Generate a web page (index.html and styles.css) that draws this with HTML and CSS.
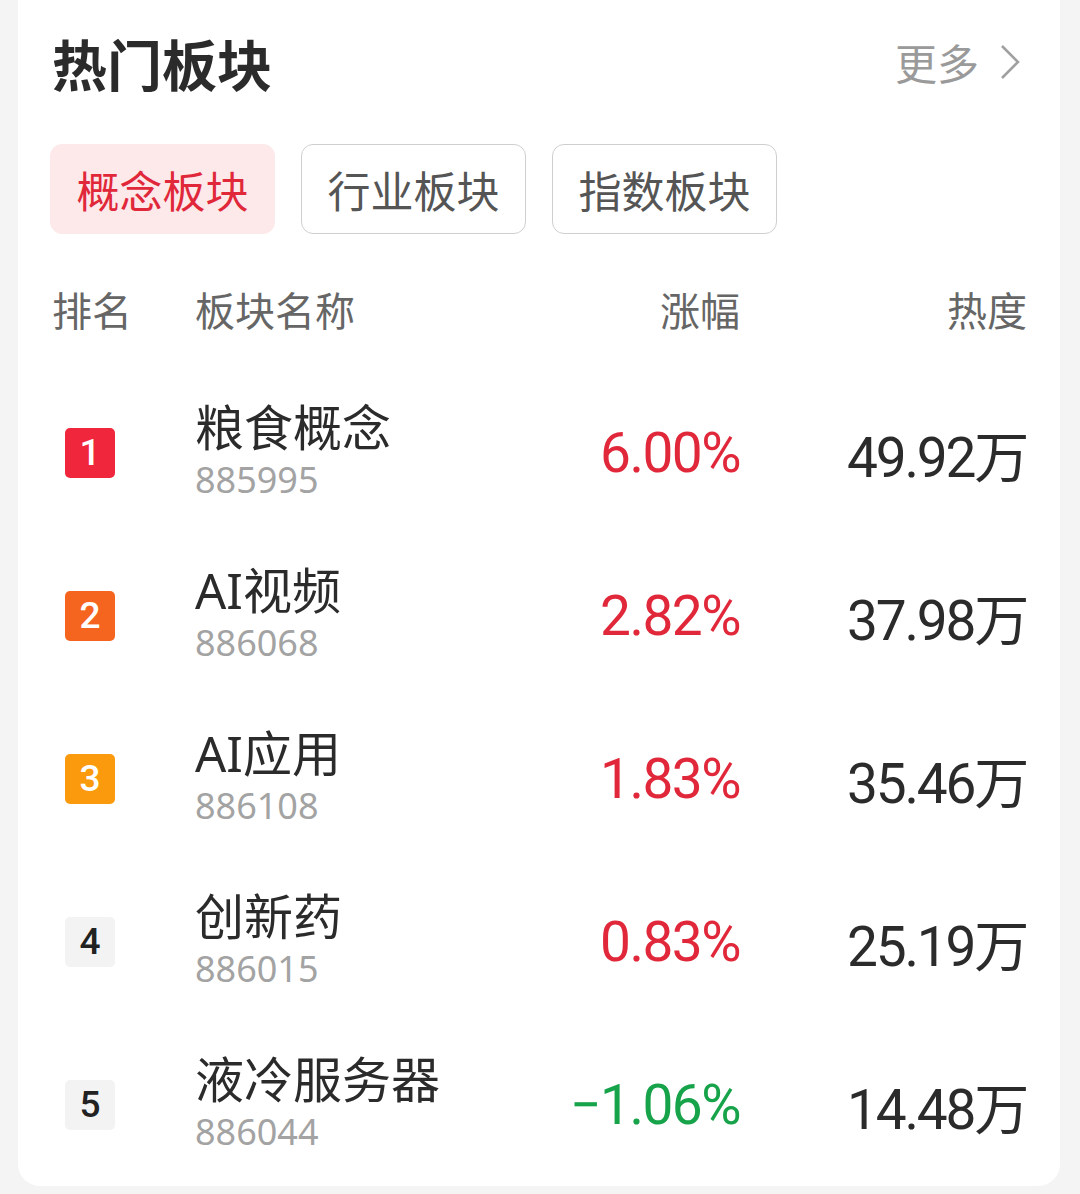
FILE: index.html
```html
<!DOCTYPE html>
<html lang="zh-CN">
<head>
    <meta charset="UTF-8">
    <meta name="viewport" content="width=device-width, initial-scale=1.0">
    <title>热门板块</title>
    <link rel="stylesheet" href="styles.css">
</head>
<body>
    <div class="card">
        <div class="card-head">
            <h1>热门板块</h1>
            <a class="more">更多
                <svg width="22" height="38" viewBox="0 0 22 38"><path d="M3 3 L19 19 L3 35" fill="none" stroke="#a0a0a0" stroke-width="2.6"/></svg>
            </a>
        </div>

        <div class="tabs">
            <span class="tab active">概念板块</span>
            <span class="tab">行业板块</span>
            <span class="tab">指数板块</span>
        </div>

        <div class="thead">
            <span>排名</span>
            <span>板块名称</span>
            <span class="num">涨幅</span>
            <span class="num">热度</span>
        </div>

        <div class="row">
            <div><span class="rank r1">1</span></div>
            <div class="name"><div class="title">粮食概念</div><div class="code">885995</div></div>
            <div class="num change up">6.00%</div>
            <div class="num heat">49.92万</div>
        </div>
        <div class="row">
            <div><span class="rank r2">2</span></div>
            <div class="name"><div class="title">AI视频</div><div class="code">886068</div></div>
            <div class="num change up">2.82%</div>
            <div class="num heat">37.98万</div>
        </div>
        <div class="row">
            <div><span class="rank r3">3</span></div>
            <div class="name"><div class="title">AI应用</div><div class="code">886108</div></div>
            <div class="num change up">1.83%</div>
            <div class="num heat">35.46万</div>
        </div>
        <div class="row">
            <div><span class="rank">4</span></div>
            <div class="name"><div class="title">创新药</div><div class="code">886015</div></div>
            <div class="num change up">0.83%</div>
            <div class="num heat">25.19万</div>
        </div>
        <div class="row">
            <div><span class="rank">5</span></div>
            <div class="name"><div class="title">液冷服务器</div><div class="code">886044</div></div>
            <div class="num change down">&minus;1.06%</div>
            <div class="num heat">14.48万</div>
        </div>
    </div>
</body>
</html>
```

FILE: styles.css
```css
body {
    margin: 0;
    background: #f4f4f4;
    font-family: "Noto Sans", "Noto Sans CJK SC", sans-serif;
    color: #333;
}
.card {
    background: #fff;
    margin: 0 20px 0 18px;
    padding: 25px 33px 0 34px;
    border-radius: 0 0 22px 22px;
}
.card-head {
    height: 73px;
    display: flex;
    align-items: center;
    justify-content: space-between;
}
h1 {
    margin: 0;
    font-size: 55px;
    font-weight: 700;
    color: #2b2b2b;
}
.more {
    display: flex;
    align-items: center;
    gap: 20px;
    font-size: 42px;
    color: #9a9a9a;
    margin-right: 6px;
}
.tabs {
    display: flex;
    gap: 26px;
    margin-top: 46px;
    margin-left: -2px;
}
.tab {
    width: 225px;
    height: 90px;
    box-sizing: border-box;
    border: 1.5px solid #cfcfcf;
    border-radius: 12px;
    display: flex;
    align-items: center;
    justify-content: center;
    font-size: 43px;
    color: #555;
}
.tab.active {
    border-color: #fde8ea;
    background: #fde8ea;
    color: #e0283a;
}
.thead, .row {
    display: grid;
    grid-template-columns: 143px 350px 195px 1fr;
    align-items: center;
}
.thead {
    margin-top: 46px;
    height: 52px;
    font-size: 40px;
    color: #666;
    margin-bottom: 39px;
}
.num {
    text-align: right;
}
.row {
    height: 163px;
}
.rank {
    display: flex;
    align-items: center;
    justify-content: center;
    width: 50px;
    height: 50px;
    margin-left: 13px;
    border-radius: 5px;
    background: #f3f3f3;
    color: #222;
    font-family: Roboto, sans-serif;
    font-size: 37px;
    font-weight: 500;
}
.rank.r1 { background: #f0263c; color: #fff; }
.rank.r2 { background: #f5651f; color: #fff; }
.rank.r3 { background: #fb9a0d; color: #fff; }
.title {
    font-size: 49px;
    line-height: 54px;
    color: #2b2b2b;
    white-space: nowrap;
}
.code {
    font-size: 36px;
    line-height: 52px;
    color: #a3a3a3;
}
.change, .heat {
    font-family: Roboto, "Noto Sans CJK SC", sans-serif;
    font-size: 55px;
    letter-spacing: -1.5px;
}
.heat {
    color: #2b2b2b;
    letter-spacing: -2.2px;
}
.up { color: #e0283a; }
.down { color: #16a34a; }
```
